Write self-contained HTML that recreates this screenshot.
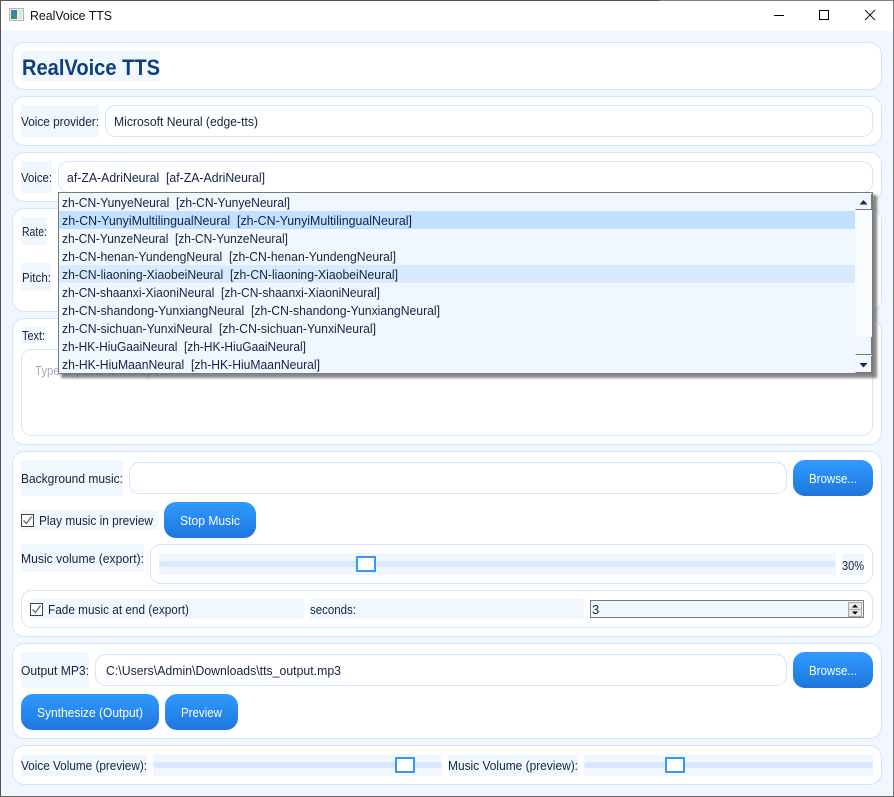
<!DOCTYPE html>
<html><head><meta charset="utf-8"><title>RealVoice TTS</title>
<style>
html,body{margin:0;padding:0;background:#f0f7ff;width:894px;height:797px;overflow:hidden}
svg{display:block;position:absolute;left:0;top:0}
text{font-family:"Liberation Sans",sans-serif;font-size:13px;fill:#14233f;white-space:pre}
.g{fill:#fff;stroke:#d3e5fd;stroke-width:1}
.i{fill:#fff;stroke:#d3e5fd;stroke-width:1}
.l{fill:#f0f7ff}
.t{fill:#d9e9fd}
.h{fill:#fff;stroke:#3399ff;stroke-width:2}
</style></head><body>
<svg width="894" height="797" viewBox="0 0 894 797" xmlns="http://www.w3.org/2000/svg">
<defs>
<linearGradient id="b" x1="0" y1="0" x2="0" y2="1"><stop offset="0" stop-color="#2f9bff"/><stop offset="1" stop-color="#1f75dc"/></linearGradient>
<pattern id="d" width="2" height="2" patternUnits="userSpaceOnUse"><rect width="2" height="2" fill="#fff"/><rect width="1" height="1" fill="#f0f7ff"/><rect x="1" y="1" width="1" height="1" fill="#f0f7ff"/></pattern>
<filter id="s" x="-2%" y="-5%" width="104%" height="110%"><feGaussianBlur stdDeviation="1.2"/></filter>
</defs>
<rect width="894" height="797" fill="#f0f7ff"/>
<rect width="894" height="31" fill="#fff"/>
<rect x="9.5" y="8.5" width="14" height="12" fill="#eee" stroke="#b5b5b5"/>
<rect x="11" y="10" width="6" height="9" fill="#3a8a8a"/><rect x="11" y="10" width="6" height="4" fill="#4a78b8"/>
<rect x="18" y="10" width="4" height="9" fill="#d5e8dd"/>
<text x="30" y="20" textLength="82" lengthAdjust="spacingAndGlyphs" style="fill:#111">RealVoice TTS</text>
<path d="M774 15.5H784" stroke="#000" fill="none"/>
<rect x="819.5" y="10.5" width="9" height="9" fill="none" stroke="#000"/>
<path d="M865 10L875 20M875 10L865 20" stroke="#111" fill="none"/>

<rect class="g" x="12.5" y="42.5" width="869" height="47" rx="12"/>
<rect class="l" x="21" y="51" width="139" height="30"/>
<text x="22" y="75" textLength="138" lengthAdjust="spacingAndGlyphs" style="font-size:22px;font-weight:bold;fill:#0d3f7c">RealVoice TTS</text>

<rect class="g" x="12.5" y="96.5" width="869" height="49" rx="12"/>
<rect class="l" x="21" y="105" width="78" height="32"/>
<text x="21" y="126" textLength="78" lengthAdjust="spacingAndGlyphs">Voice provider:</text>
<rect class="i" x="105.5" y="105.5" width="767" height="31" rx="10"/>
<text x="114" y="126" textLength="144" lengthAdjust="spacingAndGlyphs">Microsoft Neural (edge-tts)</text>

<rect class="g" x="12.5" y="152.5" width="869" height="49" rx="12"/>
<rect class="l" x="21" y="161" width="31" height="32"/>
<text x="21" y="182" textLength="31" lengthAdjust="spacingAndGlyphs">Voice:</text>
<rect class="i" x="58.5" y="161.5" width="814" height="31" rx="10"/>
<text x="67" y="182" textLength="198" lengthAdjust="spacingAndGlyphs">af-ZA-AdriNeural  [af-ZA-AdriNeural]</text>

<rect class="g" x="12.5" y="208.5" width="869" height="103" rx="12"/>
<rect class="l" x="21" y="217" width="26" height="28"/>
<text x="22" y="236" textLength="25" lengthAdjust="spacingAndGlyphs">Rate:</text>
<rect class="l" x="21" y="263" width="30" height="28"/>
<text x="22" y="282" textLength="29" lengthAdjust="spacingAndGlyphs">Pitch:</text>

<rect class="g" x="12.5" y="318.5" width="869" height="126" rx="12"/>
<rect class="l" x="21" y="327" width="25" height="16"/>
<text x="22" y="340" textLength="23" lengthAdjust="spacingAndGlyphs">Text:</text>
<rect class="i" x="21.5" y="349.5" width="851" height="86" rx="10"/>
<text x="35" y="375" textLength="146" lengthAdjust="spacingAndGlyphs" style="fill:#a3abb8">Type or paste text to speak...</text>

<rect x="61" y="195" width="816" height="183" fill="#555" opacity=".7" filter="url(#s)"/>
<rect x="58.5" y="192.5" width="814" height="181" fill="#f0f7ff" stroke="#7a7a7a"/>
<rect x="59" y="211" width="796" height="18" fill="#c2e0ff"/>
<rect x="59" y="265" width="796" height="18" fill="#d8eafd"/>
<text x="62" y="207" textLength="228" lengthAdjust="spacingAndGlyphs">zh-CN-YunyeNeural  [zh-CN-YunyeNeural]</text>
<text x="62" y="225" textLength="350" lengthAdjust="spacingAndGlyphs">zh-CN-YunyiMultilingualNeural  [zh-CN-YunyiMultilingualNeural]</text>
<text x="62" y="243" textLength="226" lengthAdjust="spacingAndGlyphs">zh-CN-YunzeNeural  [zh-CN-YunzeNeural]</text>
<text x="62" y="261" textLength="334" lengthAdjust="spacingAndGlyphs">zh-CN-henan-YundengNeural  [zh-CN-henan-YundengNeural]</text>
<text x="62" y="279" textLength="336" lengthAdjust="spacingAndGlyphs">zh-CN-liaoning-XiaobeiNeural  [zh-CN-liaoning-XiaobeiNeural]</text>
<text x="62" y="297" textLength="318" lengthAdjust="spacingAndGlyphs">zh-CN-shaanxi-XiaoniNeural  [zh-CN-shaanxi-XiaoniNeural]</text>
<text x="62" y="315" textLength="378" lengthAdjust="spacingAndGlyphs">zh-CN-shandong-YunxiangNeural  [zh-CN-shandong-YunxiangNeural]</text>
<text x="62" y="333" textLength="314" lengthAdjust="spacingAndGlyphs">zh-CN-sichuan-YunxiNeural  [zh-CN-sichuan-YunxiNeural]</text>
<text x="62" y="351" textLength="244" lengthAdjust="spacingAndGlyphs">zh-HK-HiuGaaiNeural  [zh-HK-HiuGaaiNeural]</text>
<text x="62" y="369" textLength="258" lengthAdjust="spacingAndGlyphs">zh-HK-HiuMaanNeural  [zh-HK-HiuMaanNeural]</text>
<rect x="855" y="193" width="17" height="180" fill="url(#d)"/>
<rect x="856" y="194" width="16" height="16" fill="#f0f7ff"/><path d="M871.5 194V209.5H855.5" fill="none" stroke="#777"/>
<path d="M859.500 204.500L863.500 200L867.500 204.500Z" fill="#0d2d5e"/>
<rect x="856" y="337" width="16" height="17" fill="#f0f7ff"/><path d="M871.5 337V354.5H855.5" fill="none" stroke="#777"/>
<rect x="856" y="356" width="16" height="17" fill="#f0f7ff"/><path d="M871.5 356V372.5H855.5" fill="none" stroke="#777"/>
<path d="M859.500 363L863.500 367.500L867.500 363Z" fill="#0d2d5e"/>

<rect class="g" x="12.5" y="451.500" width="869" height="185" rx="12"/>
<rect class="l" x="21" y="460" width="102" height="36"/>
<text x="21" y="483" textLength="102" lengthAdjust="spacingAndGlyphs">Background music:</text>
<rect class="i" x="129.500" y="462.500" width="657" height="31" rx="10"/>
<rect x="793" y="460" width="80" height="36" rx="12" fill="url(#b)"/>
<text x="809" y="483" textLength="48" lengthAdjust="spacingAndGlyphs" style="fill:#fff">Browse...</text>
<rect class="l" x="21" y="510" width="137" height="20"/>
<rect x="21.500" y="514.500" width="12" height="12" fill="#fff" stroke="#444"/>
<path d="M23.500 520.500L26.500 523.500L31.500 516.500" fill="none" stroke="#666" stroke-width="1.300"/>
<text x="39" y="525" textLength="114" lengthAdjust="spacingAndGlyphs">Play music in preview</text>
<rect x="164" y="502" width="92" height="36" rx="12" fill="url(#b)"/>
<text x="180" y="525" textLength="60" lengthAdjust="spacingAndGlyphs" style="fill:#fff">Stop Music</text>
<rect class="l" x="21" y="544" width="123" height="28"/>
<text x="21" y="563" textLength="123" lengthAdjust="spacingAndGlyphs">Music volume (export):</text>
<rect class="i" x="150.500" y="544.500" width="722" height="39" rx="10"/>
<rect class="l" x="159" y="553" width="677" height="22"/>
<rect class="t" x="159" y="561" width="677" height="6" rx="3"/>
<rect class="h" x="357" y="557" width="18" height="14"/>
<rect class="l" x="842" y="553" width="22" height="22"/>
<text x="842" y="570" textLength="22" lengthAdjust="spacingAndGlyphs">30%</text>
<rect class="i" x="21.500" y="590.500" width="851" height="37" rx="10"/>
<rect class="l" x="30" y="599" width="274" height="20"/>
<rect x="30.500" y="603.500" width="12" height="12" fill="#fff" stroke="#444"/>
<path d="M32.500 609.500L35.500 612.500L40.500 605.500" fill="none" stroke="#666" stroke-width="1.300"/>
<text x="48" y="614" textLength="141" lengthAdjust="spacingAndGlyphs">Fade music at end (export)</text>
<rect class="l" x="310" y="599" width="274" height="20"/>
<text x="310" y="614" textLength="46" lengthAdjust="spacingAndGlyphs">seconds:</text>
<rect x="590.500" y="600.500" width="273" height="17" fill="#f0f7ff" stroke="#7a7a7a"/>
<text x="592" y="614">3</text>
<rect x="848.500" y="602.500" width="13" height="14" fill="#e8e8e8" stroke="#aaa"/><path d="M848.500 609.500H861.500" stroke="#aaa"/>
<path d="M852 607.500L855 604.500L858 607.500Z" fill="#000"/><path d="M852 611.500L855 614.500L858 611.500Z" fill="#000"/>

<rect class="g" x="12.500" y="643.500" width="869" height="95" rx="12"/>
<rect class="l" x="21" y="652" width="68" height="36"/>
<text x="21" y="675" textLength="68" lengthAdjust="spacingAndGlyphs">Output MP3:</text>
<rect class="i" x="95.500" y="654.500" width="691" height="31" rx="10"/>
<text x="106" y="675" textLength="235" lengthAdjust="spacingAndGlyphs">C:\Users\Admin\Downloads\tts_output.mp3</text>
<rect x="793" y="652" width="80" height="36" rx="12" fill="url(#b)"/>
<text x="809" y="675" textLength="48" lengthAdjust="spacingAndGlyphs" style="fill:#fff">Browse...</text>
<rect x="21" y="694" width="138" height="36" rx="12" fill="url(#b)"/>
<text x="37" y="717" textLength="106" lengthAdjust="spacingAndGlyphs" style="fill:#fff">Synthesize (Output)</text>
<rect x="165" y="694" width="73" height="36" rx="12" fill="url(#b)"/>
<text x="181" y="717" textLength="41" lengthAdjust="spacingAndGlyphs" style="fill:#fff">Preview</text>

<rect class="g" x="12.500" y="745.500" width="869" height="39" rx="12"/>
<rect class="l" x="21" y="754" width="126" height="22"/>
<text x="21" y="770" textLength="126" lengthAdjust="spacingAndGlyphs">Voice Volume (preview):</text>
<rect class="l" x="153" y="754" width="289" height="22"/>
<rect class="t" x="153" y="762" width="289" height="6" rx="3"/>
<rect class="h" x="396" y="758" width="18" height="14"/>
<rect class="l" x="448" y="754" width="130" height="22"/>
<text x="448" y="770" textLength="130" lengthAdjust="spacingAndGlyphs">Music Volume (preview):</text>
<rect class="l" x="584" y="754" width="289" height="22"/>
<rect class="t" x="584" y="762" width="289" height="6" rx="3"/>
<rect class="h" x="666" y="758" width="18" height="14"/>

<path d="M0 .5H660" stroke="#555"/><path d="M660 .5H894" stroke="#808080"/>
<path d="M.5 0V797" stroke="#555"/>
<path d="M893.500 0V797" stroke="#777"/>
<path d="M0 796.500H894" stroke="#666"/>
</svg>
</body></html>
